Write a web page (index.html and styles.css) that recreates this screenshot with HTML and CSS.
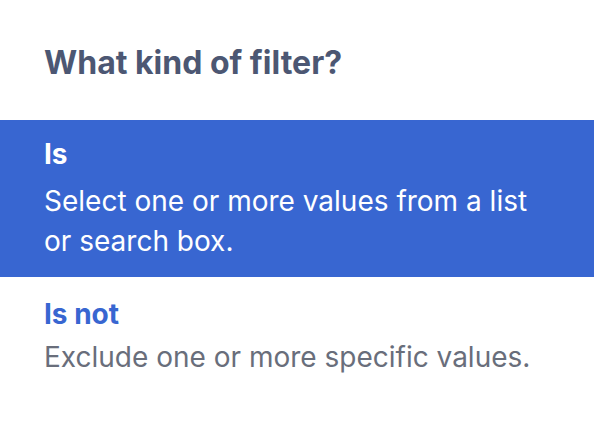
FILE: index.html
```html
<!DOCTYPE html>
<html>
<head>
<meta charset="utf-8">
<link rel="stylesheet" href="styles.css">
</head>
<body>
<div class="popover">
  <h2 class="title">What kind of filter?</h2>
  <ul class="options">
    <li class="option selected">
      <div class="opt-name">Is</div>
      <div class="opt-desc">Select one or more values from a list or search box.</div>
    </li>
    <li class="option">
      <div class="opt-name">Is not</div>
      <div class="opt-desc">Exclude one or more specific values.</div>
    </li>
  </ul>
</div>
</body>
</html>
```
FILE: styles.css
```css
* { box-sizing: border-box; }
html, body {
  margin: 0;
  padding: 0;
  background: #ffffff;
  font-family: Inter, "Noto Sans", sans-serif;
}
.popover {
  width: 594px;
  height: 424px;
  background: #fff;
}
.title {
  margin: 0;
  padding: 43px 44px 37px;
  font-size: 32px;
  line-height: 40px;
  font-weight: 700;
  color: #4c5773;
}
.options {
  list-style: none;
  margin: 0;
  padding: 0;
}
.option {
  padding: 16px 54px 16px 44px;
}
.option + .option {
  padding-top: 19px;
}
.opt-name {
  font-size: 28px;
  line-height: 36px;
  font-weight: 700;
  color: #3866d1;
}
.opt-desc {
  margin-top: 5px;
  font-size: 28px;
  line-height: 40px;
  color: #696e7b;
}
.option.selected {
  background: #3866d1;
}
.option.selected .opt-name,
.option.selected .opt-desc {
  color: #ffffff;
}
.option.selected .opt-desc {
  margin-top: 9px;
}
```
